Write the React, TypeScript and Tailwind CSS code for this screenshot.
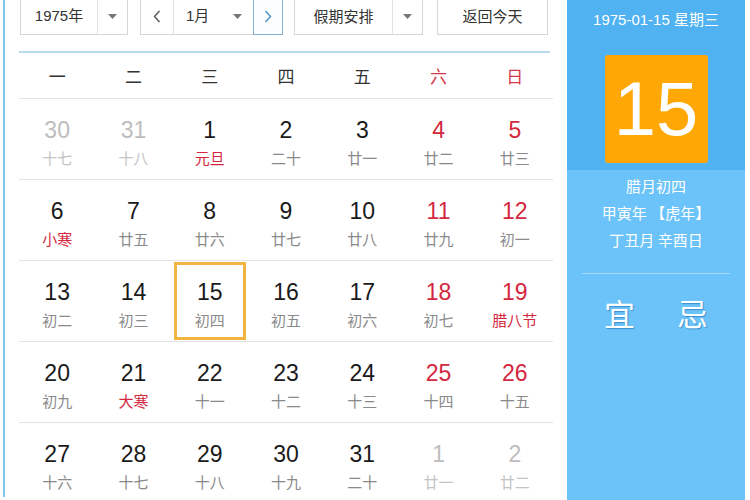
import React from 'react';

type Day = { n: number; l: string; dim?: boolean; redNum?: boolean; redLunar?: boolean; sel?: boolean };

const weeks: Day[][] = [
  [
    { n: 30, l: '十七', dim: true },
    { n: 31, l: '十八', dim: true },
    { n: 1, l: '元旦', redLunar: true },
    { n: 2, l: '二十' },
    { n: 3, l: '廿一' },
    { n: 4, l: '廿二', redNum: true },
    { n: 5, l: '廿三', redNum: true },
  ],
  [
    { n: 6, l: '小寒', redLunar: true },
    { n: 7, l: '廿五' },
    { n: 8, l: '廿六' },
    { n: 9, l: '廿七' },
    { n: 10, l: '廿八' },
    { n: 11, l: '廿九', redNum: true },
    { n: 12, l: '初一', redNum: true },
  ],
  [
    { n: 13, l: '初二' },
    { n: 14, l: '初三' },
    { n: 15, l: '初四', sel: true },
    { n: 16, l: '初五' },
    { n: 17, l: '初六' },
    { n: 18, l: '初七', redNum: true },
    { n: 19, l: '腊八节', redNum: true, redLunar: true },
  ],
  [
    { n: 20, l: '初九' },
    { n: 21, l: '大寒', redLunar: true },
    { n: 22, l: '十一' },
    { n: 23, l: '十二' },
    { n: 24, l: '十三' },
    { n: 25, l: '十四', redNum: true },
    { n: 26, l: '十五', redNum: true },
  ],
  [
    { n: 27, l: '十六' },
    { n: 28, l: '十七' },
    { n: 29, l: '十八' },
    { n: 30, l: '十九' },
    { n: 31, l: '二十' },
    { n: 1, l: '廿一', dim: true },
    { n: 2, l: '廿二', dim: true },
  ],
];

const heads = ['一', '二', '三', '四', '五', '六', '日'];

const Caret = () => (
  <svg width="9" height="5" viewBox="0 0 9 5"><path d="M0 0h9L4.5 5z" fill="#777" /></svg>
);

function Cell({ d }: { d: Day }) {
  const numColor = d.dim ? 'text-[#bdbdbd]' : d.redNum ? 'text-[#d3283e]' : 'text-[#1a1a1a]';
  const lunarColor = d.dim ? 'text-[#c4c4c4]' : d.redLunar ? 'text-[#d3283e]' : 'text-[#8a8a8a]';
  return (
    <div className="flex justify-center">
      <div
        className={
          'mt-[1px] w-[72px] h-[78px] border-[3px] flex flex-col items-center pt-[14px] ' +
          (d.sel ? 'border-[#f2b440]' : 'border-transparent')
        }
      >
        <div className={'text-[23px] leading-[26px] ' + numColor}>{d.n}</div>
        <div className={'mt-[6px] text-[15px] leading-[20px] ' + lunarColor}>{d.l}</div>
      </div>
    </div>
  );
}

export default function App() {
  return (
    <div
      className="w-[750px] h-[500px] overflow-hidden flex bg-white"
      style={{ fontFamily: '"Liberation Sans", Arial, "Noto Sans CJK SC", sans-serif' }}
    >
      <div className="w-[567px] shrink-0 pl-[3px]">
        <div className="h-full border-l-2 border-[#7ec8ef] pl-[14px] pr-[14px]">
          {/* toolbar */}
          <div className="-mt-[3px] h-[38px] flex items-stretch text-[15px] text-[#333]">
            <div className="ml-[1px] w-[108px] flex border border-[#d6d6d6] bg-white">
              <div className="w-[76px] flex items-center justify-center">1975年</div>
              <div className="flex-1 border-l border-[#e2e2e2] flex items-center justify-center">
                <Caret />
              </div>
            </div>
            <div className="ml-[12px] w-[143px] flex border border-[#d6d6d6] bg-white">
              <div className="w-[32px] flex items-center justify-center text-[#555]">
                <svg width="8" height="13" viewBox="0 0 8 13"><path d="M6.5 1L1.5 6.5 6.5 12" stroke="#555" strokeWidth="1.4" fill="none" /></svg>
              </div>
              <div className="w-[80px] border-l border-[#e2e2e2] flex items-center pl-[12px]">
                <span>1月</span>
                <span className="ml-auto mr-[11px] flex"><Caret /></span>
              </div>
              <div className="flex-1 border border-[#7fb0d4] -my-px -mr-px flex items-center justify-center bg-[#fbfdff]">
                <svg width="8" height="13" viewBox="0 0 8 13"><path d="M1.5 1L6.5 6.5 1.5 12" stroke="#4a90c4" strokeWidth="1.4" fill="none" /></svg>
              </div>
            </div>
            <div className="ml-[11px] w-[129px] flex border border-[#d6d6d6] bg-white">
              <div className="w-[97px] flex items-center justify-center" style={{ fontFamily: '"Noto Sans CJK SC", sans-serif' }}>假期安排</div>
              <div className="flex-1 border-l border-[#e2e2e2] flex items-center justify-center">
                <Caret />
              </div>
            </div>
            <div
              className="ml-[14px] w-[111px] flex items-center justify-center border border-[#d6d6d6] bg-white"
              style={{ fontFamily: '"Noto Sans CJK SC", sans-serif' }}
            >
              返回今天
            </div>
          </div>

          <div className="mt-[16px] h-[2px] bg-[#b7dbec] mr-[3px]" />

          {/* week header */}
          <div className="grid grid-cols-7 h-[46px] items-center text-[17px] border-b border-[#e3e3e3]" style={{ fontFamily: '"Noto Sans CJK SC", sans-serif' }}>
            {heads.map((h, i) => (
              <div key={h} className={'text-center ' + (i >= 5 ? 'text-[#d63a4a]' : 'text-[#333]')}>{h}</div>
            ))}
          </div>

          {weeks.map((w, i) => (
            <div key={i} className="grid grid-cols-7 h-[81px] border-b border-[#e3e3e3]">
              {w.map((d, j) => (
                <Cell key={j} d={d} />
              ))}
            </div>
          ))}
        </div>
      </div>

      {/* right panel */}
      <div className="w-[178px] shrink-0 flex flex-col text-white">
        <div className="bg-[#50b2f1] h-[170px] flex flex-col items-center">
          <div className="mt-[10px] text-[15px] leading-[20px]">1975-01-15 星期三</div>
          <div className="mt-[25px] w-[103px] h-[108px] rounded-[3px] bg-[#ffa805] flex items-center justify-center">
            <span className="text-[76px] leading-none font-normal">15</span>
          </div>
        </div>
        <div className="flex-1 bg-[#6bc3f9] flex flex-col items-center" style={{ fontFamily: '"Noto Sans CJK SC", sans-serif' }}>
          <div className="mt-[2px] text-[15px] leading-[27px] text-center">
            <div>腊月初四</div>
            <div>甲寅年 【虎年】</div>
            <div>丁丑月 辛酉日</div>
          </div>
          <div className="mt-[20px] w-[148px] h-px bg-[#a6d9fa]" />
          <div className="mt-[19px] flex gap-[42px] text-[31px] leading-[40px]" style={{ textShadow: '1px 1px 1px #3d8fd0' }}>
            <span>宜</span>
            <span>忌</span>
          </div>
        </div>
      </div>
      <div className="flex-1 bg-white" />
    </div>
  );
}
